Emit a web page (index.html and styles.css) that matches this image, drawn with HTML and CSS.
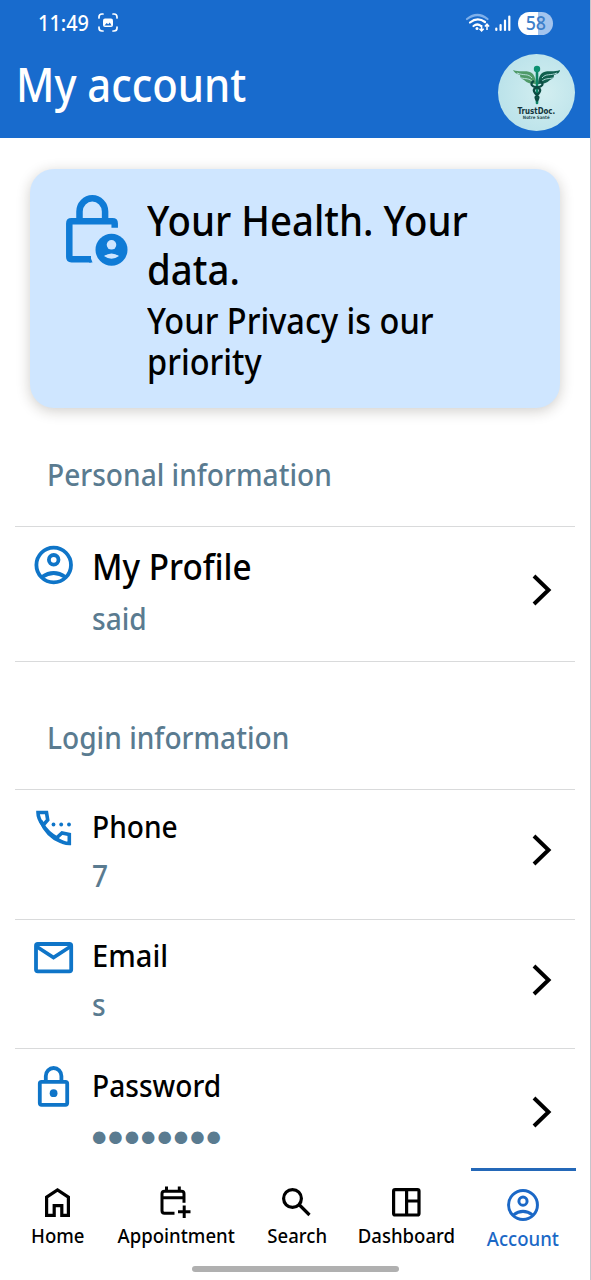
FILE: index.html
```html
<!DOCTYPE html>
<html lang="en">
<head>
<meta charset="utf-8">
<title>My account</title>
<link rel="stylesheet" href="styles.css">
</head>
<body>
<div class="app">
  <header class="header">
    <div class="status">
      <span class="t clock">11:49</span>
      <svg class="shot" width="22" height="22" viewBox="97 13 22 22" fill="none" stroke="#fff" stroke-width="1.7" stroke-linecap="round">
        <path d="M99 19v-1q0-3 3-3h1M113 15h1q3 0 3 3v1M117 28v1q0 3-3 3h-1M103 32h-1q-3 0-3-3v-1"/>
        <rect x="103" y="19.500" width="10" height="8.500" rx="2" fill="#fff" stroke="none"/>
        <path d="M104.500 26.500l2.200-2.500 1.500 1.200 1.600-1.800 1.700 3.100z" fill="#186bcd" stroke="none"/>
      </svg>
      <svg class="signal" width="90" height="26" viewBox="466 10 90 26" fill="none">
        <path d="M468 19q10.500-8 20.500 0" stroke="#7fb0ea" stroke-width="2.200" stroke-linecap="round"/>
        <path d="M471 22.500q7.500-6 15-.5M474.500 26q3.800-3 7.500 0" stroke="#fff" stroke-width="2.200" stroke-linecap="round"/>
        <circle cx="478" cy="28.500" r="1.500" fill="#fff"/>
        <path d="M482.600 25v5.500M480.500 28.700l2.100 2.300 2.100-2.300M488 30v-5.500M485.900 26.500l2.100-2.300 2.100 2.300" stroke="#fff" stroke-width="1.500"/>
        <path d="M497.300 28.500v1.500M501.600 25v5M506 20.500v9.500M510.300 16.500v13.500" stroke="#fff" stroke-width="2.200" stroke-linecap="round"/>
      </svg>
      <span class="battery"><span class="t">58</span></span>
    </div>
    <div class="titlebar">
      <h1 class="t title">My account</h1>
      <div class="avatar">
        <svg width="60" height="44" viewBox="507 61 60 44">
          <path d="M536 83c-5 0-9-1-12-4-3-1-4-3-4-5-4-1-6-3-7-5 8 3 15-1 20 4 2 3 3 6 3 10z" fill="#4f9a68"/>
          <path d="M538 83c5 0 9-1 12-4 3-1 4-3 4-5 4-1 6-3 6-5-8 3-14-1-19 4-2 3-3 6-3 10z" fill="#12604f"/>
          <path d="M517 72c7 3 11 0 15 5M521 77c5 1 8 0 12 4M557 72c-7 3-11 0-15 5M553 77c-5 1-8 0-12 4" stroke="#bfe3e4" stroke-width=".9" fill="none"/>
          <path d="M537 69v33" stroke="#0c8464" stroke-width="2.600" stroke-linecap="round"/>
          <path d="M534 80c-4 2-3 5 1 6s7 2 4 6-5 3-2 8M540 80c4 2 3 5-1 6s-7 2-4 6 5 3 2 8" stroke="#0b4b42" stroke-width="2.200" fill="none"/>
          <circle cx="537" cy="68" r="3.200" fill="#0c9070"/>
        </svg>
        <span class="brand">TrustDoc.</span>
        <span class="tagline">Notre Santé</span>
      </div>
    </div>
  </header>

  <main class="content">
    <section class="card">
      <svg width="66" height="76" viewBox="64 193 66 76" fill="none" stroke="#0f7bd6" stroke-width="6.500">
        <path d="M79.500 220v-8.500a12.800 13.200 0 0 1 25.600 0V220"/>
        <path d="M114.700 227.700v-4.200q0-2.200-2.200-2.200H71.500q-2.200 0-2.200 2.200v33.500q0 2.200 2.200 2.200H91"/>
        <path d="M89 256h1l2.500 6.500H89z" fill="#0f7bd6" stroke="none"/>
        <circle cx="111.500" cy="249.700" r="16" fill="#0f7bd6" stroke="none"/>
        <circle cx="111.500" cy="244.800" r="4.800" fill="#cfe6ff" stroke="none"/>
        <path d="M104 256q7.500-5 15 0-7.500 5.500-15 0z" fill="#cfe6ff" stroke="none"/>
      </svg>
      <div class="card-text">
        <h2 class="t card-title">Your Health. Your<br>data.</h2>
        <p class="t card-sub">Your Privacy is our<br>priority</p>
      </div>
    </section>

    <h3 class="section"><span class="t">Personal information</span></h3>
    <div class="list">
      <div class="row profile">
        <svg class="icon" width="40" height="40" viewBox="0 0 40 40" fill="none" stroke="#0f75c8" stroke-width="3.800">
          <circle cx="19.700" cy="20" r="17.300"/><circle cx="19.700" cy="14.800" r="4.800"/><path d="M8 32q11.700-8 23.400 0"/>
        </svg>
        <div class="info"><span class="t name">My Profile</span><span class="t value">said</span></div>
        <svg class="chev" width="24" height="34" viewBox="0 0 24 34"><path d="M4 3l14.500 14L4 31" fill="none" stroke="#000" stroke-width="4"/></svg>
      </div>
    </div>

    <h3 class="section login"><span class="t">Login information</span></h3>
    <div class="list last">
      <div class="row">
        <svg class="icon" width="40" height="40" viewBox="34 808 40 40" fill="none" stroke="#0f75c8" stroke-width="3.600">
          <path d="M38 812.500h8.500l1.200 7.500-4.700 5.300C39.500 820.500 38 817 38 812.500z"/>
          <path d="M42.500 824.500c3.500 6 8.500 10.500 14.500 13.500M57 837.500l5-4.600 7.300 1.600v9c-4.800 0-8.800-1.800-13.300-5M41 821c3.500 9 11 17 20 20.500"/>
          <g fill="#0f75c8" stroke="none"><circle cx="53.500" cy="824.500" r="1.900"/><circle cx="61.200" cy="824.500" r="1.900"/><circle cx="69" cy="824.500" r="1.900"/></g>
        </svg>
        <div class="info"><span class="t name">Phone</span><span class="t value">7</span></div>
        <svg class="chev" width="24" height="34" viewBox="0 0 24 34"><path d="M4 3l14.500 14L4 31" fill="none" stroke="#000" stroke-width="4"/></svg>
      </div>
      <div class="row">
        <svg class="icon" width="40" height="40" viewBox="34 938 40 40" fill="none" stroke="#0f75c8" stroke-width="3.800">
          <rect x="36" y="944" width="35.200" height="27.400" rx="1.800"/><path d="M36.500 946.500l17 11 17-11"/>
        </svg>
        <div class="info"><span class="t name email">Email</span><span class="t value">s</span></div>
        <svg class="chev" width="24" height="34" viewBox="0 0 24 34"><path d="M4 3l14.500 14L4 31" fill="none" stroke="#000" stroke-width="4"/></svg>
      </div>
      <div class="row password">
        <svg class="icon" width="40" height="44" viewBox="34 1065 40 44" fill="none" stroke="#0f75c8" stroke-width="3.800">
          <rect x="39.800" y="1081.800" width="27.400" height="23" rx="1.800"/><path d="M45.800 1081v-5a7.800 8 0 0 1 15.600 0v5"/><circle cx="53.600" cy="1093.200" r="3.900" fill="#0f75c8" stroke="none"/>
        </svg>
        <div class="info"><span class="t name">Password</span><span class="dots">••••••••</span></div>
        <svg class="chev" width="24" height="34" viewBox="0 0 24 34"><path d="M4 3l14.500 14L4 31" fill="none" stroke="#000" stroke-width="4"/></svg>
      </div>
    </div>
  </main>

  <nav class="nav">
    <a class="tab"><svg width="34" height="34" viewBox="41 1185 34 34" fill="none" stroke="#000" stroke-width="3.200"><path d="M46.600 1215.400v-18.200l10.900-7.300 10.900 7.300v18.200h-6.600v-9.800h-7.600v9.800z"/></svg><span class="t">Home</span></a>
    <a class="tab"><svg width="34" height="34" viewBox="160 1185 34 34" fill="none" stroke="#000" stroke-width="3"><path d="M175.500 1213.300h-10q-2.500 0-2.500-2.500v-17q0-2.500 2.500-2.500h17q2.500 0 2.500 2.500v9M163 1197.800h22M167.500 1186.500v5M180.300 1186.500v5M179 1211.800h12.500M185.200 1205.500v12.500"/></svg><span class="t">Appointment</span></a>
    <a class="tab"><svg width="34" height="34" viewBox="280 1185 34 34" fill="none" stroke="#000" stroke-width="3.200"><circle cx="292.500" cy="1198.500" r="8.900"/><path d="M299 1204.500l10.500 10.500"/></svg><span class="t">Search</span></a>
    <a class="tab"><svg width="34" height="34" viewBox="390 1185 34 34" fill="none" stroke="#000" stroke-width="3.200"><rect x="393.600" y="1189.600" width="25.400" height="25.400" rx="1.500"/><path d="M406.600 1190v25M407 1201h12"/></svg><span class="t">Dashboard</span></a>
    <a class="tab active"><svg width="34" height="34" viewBox="0 0 40 40" fill="none" stroke="#1b68c6" stroke-width="3.500"><circle cx="20" cy="20" r="17"/><circle cx="20" cy="15.500" r="4.800"/><path d="M8.500 32q11.500-9 23 0"/></svg><span class="t">Account</span></a>
  </nav>
  <div class="handle"></div>
</div>
</body>
</html>
```
FILE: styles.css
```css
* { box-sizing: border-box; margin: 0; padding: 0; }
body { font-family: "Noto Sans", sans-serif; font-weight: 500; background: #fff; color: #000; }
.app { width: 591px; height: 1280px; overflow: hidden; display: flex; flex-direction: column; border-right: 1px solid #c4c6cc; }
.t { display: block; width: max-content; white-space: nowrap; font-weight: 500; transform: scaleX(.937); transform-origin: left center; }

.header { height: 138px; flex: none; background: #186bcd; color: #fff; }
.status { height: 46px; display: flex; align-items: center; padding-left: 38px; padding-right: 37px; }
.clock { font-size: 21.500px; line-height: 30px; width: 59px; transform: scaleX(.925); }
.signal { margin-left: auto; margin-right: -37px; }
.battery { width: 35px; height: 23px; border-radius: 12px; background: linear-gradient(90deg, #fff 58%, #a3c4ee 58%); color: #3d7fca; display: flex; align-items: center; justify-content: center; }
.battery .t { font-size: 19px; line-height: 23px; transform-origin: center; }
.titlebar { height: 92px; display: flex; align-items: center; justify-content: space-between; padding: 0 15px 0 16px; }
.title { font-size: 46.500px; line-height: 60px; padding-bottom: 16px; transform: scaleX(.899); }
.avatar { width: 77px; height: 77px; border-radius: 50%; background: radial-gradient(circle at 60% 50%, #d2eef0, #b4dfe8); display: flex; flex-direction: column; align-items: center; padding-top: 8px; }
.brand { font: 700 8px/9px "DejaVu Sans", sans-serif; color: #12343b; margin-top: 1px; transform: scaleX(.88); white-space: nowrap; }
.tagline { font: 700 4.500px/4px "DejaVu Sans", sans-serif; color: #2a5056; white-space: nowrap; transform: scaleX(.88); }

.content { flex: none; height: 1030px; }
.card { margin: 31px 30px 0; width: 530px; height: 239px; padding: 24px 0 0 34px; border-radius: 24px; background: #cfe6ff; box-shadow: 0 3px 14px rgba(40, 30, 20, .22); display: flex; }
.card-text { padding: 2px 0 0 17px; }
.card-title { font-size: 42.500px; line-height: 49px; transform: scaleX(.903); }
.card-sub { margin-top: 6.500px; font-size: 36.500px; line-height: 41.500px; transform: scaleX(.891); }

.section { margin-top: 47px; padding-left: 46.500px; height: 71px; font-size: 30px; line-height: 40px; color: #5a7b90; }
.login { margin-top: 56px; }
.list { margin: 0 15px; border-bottom: 1.500px solid #d9dadb; }
.list.last { border-bottom: none; }
.row { display: flex; height: 129.700px; border-top: 1.500px solid #d9dadb; padding-left: 18.500px; }
.row.profile { height: 135px; }
.icon { margin-top: 18px; flex: none; }
.password .icon { margin-top: 16px; }
.info { padding: 16.500px 0 0 18px; flex: 1; }
.name { font-size: 30px; line-height: 40px; }
.email { transform: scaleX(.97); }
.profile .name { font-size: 35.500px; line-height: 48px; }
.profile .info { padding-top: 15px; }
.value { margin-top: 9px; font-size: 30px; line-height: 40px; color: #5a7b90; }
.chev { align-self: center; margin: -8px 21px 0 0; }
.profile .chev { margin-top: -8px; }
.password .chev { margin-top: -3px; }
.dots { display: block; margin: 8px 0 0 -5px; font: 400 43px/50px "DejaVu Sans", sans-serif; letter-spacing: -9px; color: #5a7b90; }

.nav { height: 98px; flex: none; display: grid; grid-template-columns: 116px 120px 122px 97px 105px; }
.tab { display: flex; flex-direction: column; align-items: center; padding-top: 17px; }
.tab .t { font-size: 20px; line-height: 24px; margin-top: 5px; transform: scaleX(.928); transform-origin: center; }
.tab.active { margin-left: 15.500px; width: 105px; border-top: 3px solid #2468b8; color: #1b68c6; }
.handle { width: 207px; height: 6px; flex: none; margin-left: 192px; border-radius: 3px; background: #b0b0b0; }
```
